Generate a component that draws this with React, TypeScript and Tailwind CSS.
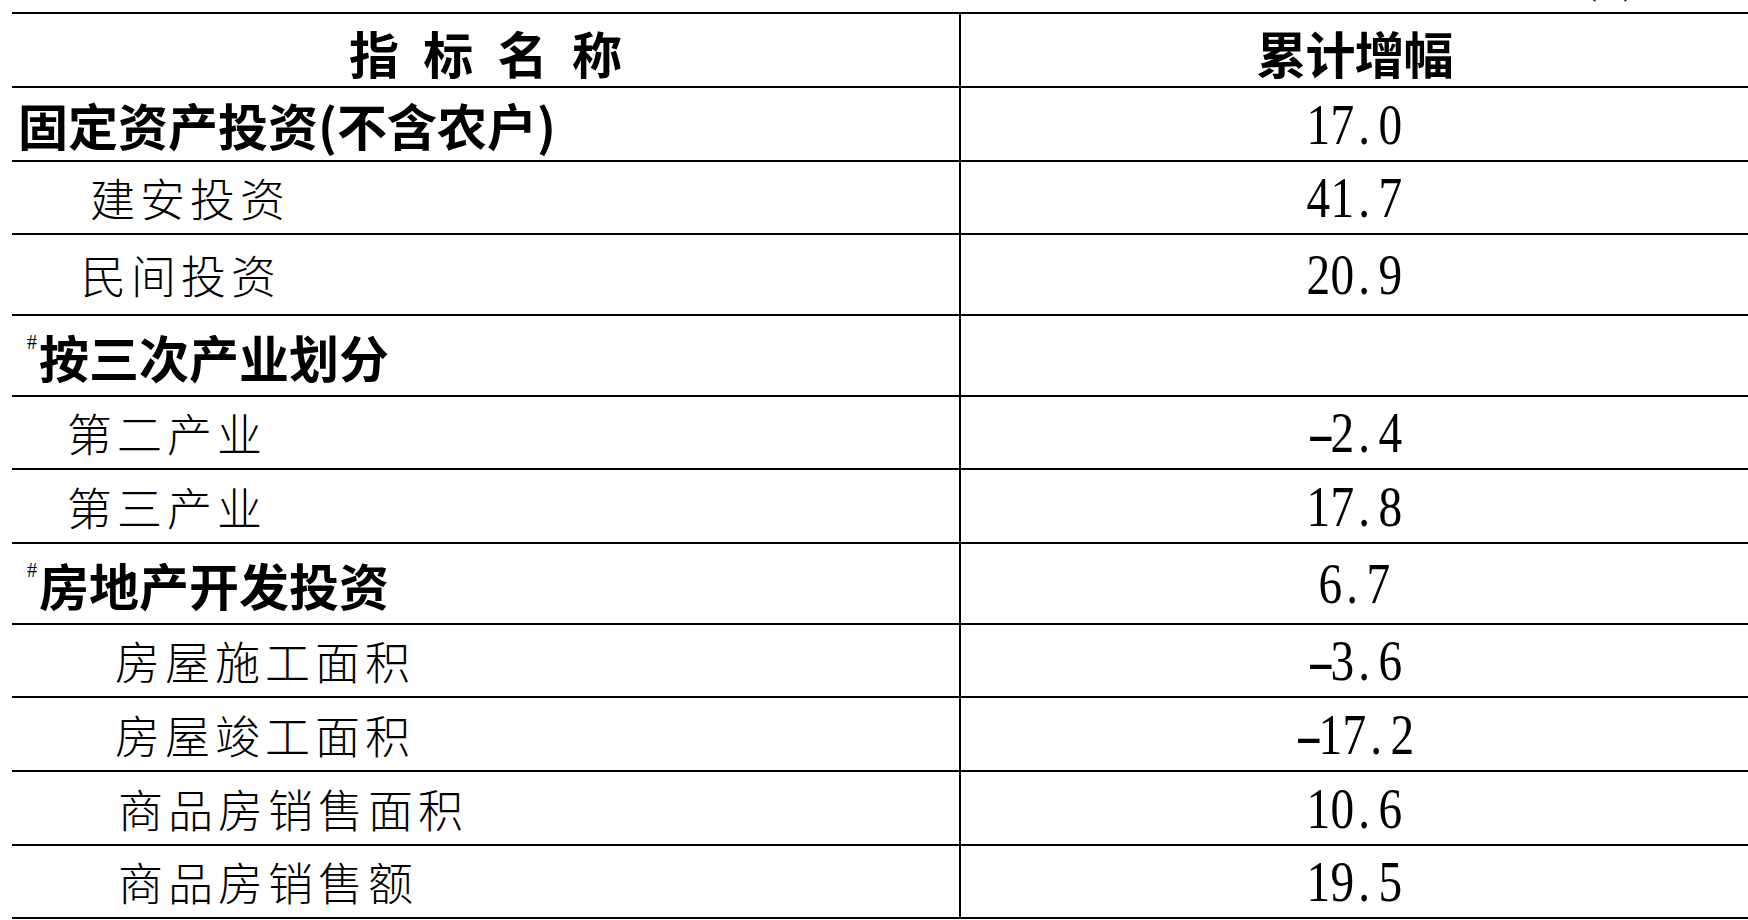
import React from "react";

type Row = {
  label: string;
  bold?: boolean;
  sharp?: boolean;
  pl: string;
  h: string;
  v: string;
};

const rows: Row[] = [
  { label: "固定资产投资(不含农户)", bold: true, pl: "pl-[6px]", h: "h-[74px]", v: "17.0" },
  { label: "建安投资", pl: "pl-[78px]", h: "h-[73px]", v: "41.7" },
  { label: "民间投资", pl: "pl-[69px]", h: "h-[81px]", v: "20.9" },
  { label: "按三次产业划分", bold: true, sharp: true, pl: "pl-[15px]", h: "h-[81px]", v: "" },
  { label: "第二产业", pl: "pl-[55px]", h: "h-[73px]", v: "-2.4" },
  { label: "第三产业", pl: "pl-[55px]", h: "h-[74px]", v: "17.8" },
  { label: "房地产开发投资", bold: true, sharp: true, pl: "pl-[15px]", h: "h-[81px]", v: "6.7" },
  { label: "房屋施工面积", pl: "pl-[103px]", h: "h-[73px]", v: "-3.6" },
  { label: "房屋竣工面积", pl: "pl-[103px]", h: "h-[74px]", v: "-17.2" },
  { label: "商品房销售面积", pl: "pl-[106px]", h: "h-[74px]", v: "10.6" },
  { label: "商品房销售额", pl: "pl-[106px]", h: "h-[73px]", v: "19.5" },
];

function Num({ v }: { v: string }) {
  return (
    <div className="flex font-['Liberation_Serif',serif] text-[57px] leading-none text-black">
      {v.split("").map((c, i) => (
        <span
          key={i}
          className={
            c === "."
              ? "w-[24px] flex justify-start pl-[2px]"
              : c === "-"
              ? "w-[24px] flex justify-start"
              : "w-[24px] flex justify-center"
          }
        >
          <span
            className={
              c === "-"
                ? "inline-block scale-x-[1.45] origin-left"
                : "inline-block scale-x-[0.83]"
            }
          >
            {c}
          </span>
        </span>
      ))}
    </div>
  );
}

export default function App() {
  const cjk = "font-['Noto_Sans_CJK_SC','Noto_Sans',sans-serif]";
  return (
    <div className="w-[1748px] h-[920px] bg-white overflow-hidden text-black">
      <div className="h-[12px] overflow-hidden">
        <div className="ml-[1586px] -mt-[32px] font-['Liberation_Serif',serif] text-[32px] leading-none">
          (%)
        </div>
      </div>
      <div className="ml-[12px]">
        <div className="flex h-[76px] border-t-2 border-b-2 border-black">
          <div
            className={`w-[949px] border-r-2 border-black flex items-center justify-center pt-[4px] ${cjk} font-bold text-[50px] leading-none [word-spacing:13px]`}
          >
            指 标 名 称
          </div>
          <div
            className={`flex-1 flex items-center justify-center pt-[4px] ${cjk} font-bold text-[50px] leading-none tracking-[-1px]`}
          >
            累计增幅
          </div>
        </div>
        {rows.map((r, i) => (
          <div key={i} className={`flex ${r.h} border-b-2 border-black`}>
            <div
              className={`w-[949px] border-r-2 border-black flex items-center ${r.pl}`}
            >
              {r.sharp && (
                <span className="relative -top-[14px] font-['Liberation_Serif',serif] text-[20px] leading-none mr-[2px]">
                  #
                </span>
              )}
              {r.bold ? (
                <span className={`${cjk} font-bold text-[50px] leading-none`}>
                  {r.label}
                </span>
              ) : (
                <span className={`${cjk} font-light text-[45px] leading-none tracking-[5px]`}>
                  {r.label}
                </span>
              )}
            </div>
            <div className="flex-1 flex items-center justify-center">
              {r.v && <Num v={r.v} />}
            </div>
          </div>
        ))}
      </div>
    </div>
  );
}
